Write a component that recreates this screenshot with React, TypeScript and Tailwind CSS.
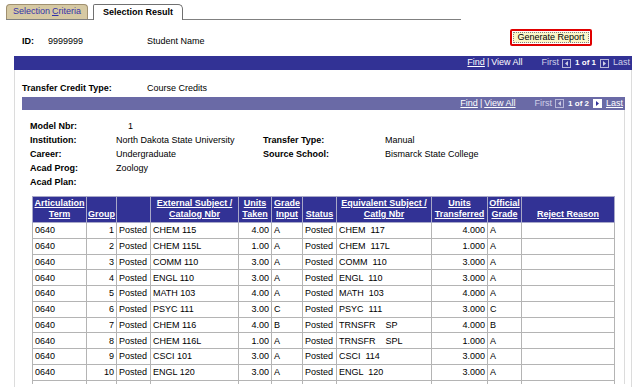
import React from 'react';

const rows = [
  ['0640', '1', 'Posted', 'CHEM 115', '4.00', 'A', 'Posted', 'CHEM  117', '4.000', 'A'],
  ['0640', '2', 'Posted', 'CHEM 115L', '1.00', 'A', 'Posted', 'CHEM  117L', '1.000', 'A'],
  ['0640', '3', 'Posted', 'COMM 110', '3.00', 'A', 'Posted', 'COMM  110', '3.000', 'A'],
  ['0640', '4', 'Posted', 'ENGL 110', '3.00', 'A', 'Posted', 'ENGL  110', '3.000', 'A'],
  ['0640', '5', 'Posted', 'MATH 103', '4.00', 'A', 'Posted', 'MATH  103', '4.000', 'A'],
  ['0640', '6', 'Posted', 'PSYC 111', '3.00', 'C', 'Posted', 'PSYC  111', '3.000', 'C'],
  ['0640', '7', 'Posted', 'CHEM 116', '4.00', 'B', 'Posted', 'TRNSFR    SP', '4.000', 'B'],
  ['0640', '8', 'Posted', 'CHEM 116L', '1.00', 'A', 'Posted', 'TRNSFR    SPL', '1.000', 'A'],
  ['0640', '9', 'Posted', 'CSCI 101', '3.00', 'A', 'Posted', 'CSCI  114', '3.000', 'A'],
  ['0640', '10', 'Posted', 'ENGL 120', '3.00', 'A', 'Posted', 'ENGL  120', '3.000', 'A'],
];

const colWidths = [54, 30, 34, 88, 33, 31, 34, 95, 56, 34, 93];
const rightAligned = [1, 4, 8];

function Arrow({ dir, enabled }: { dir: 'left' | 'right'; enabled?: boolean }) {
  return (
    <svg width="9" height="9" viewBox="0 0 9 9" className="shrink-0">
      <rect
        x="0.5"
        y="0.5"
        width="8"
        height="8"
        fill={enabled ? '#ffffff' : 'none'}
        stroke={enabled ? '#ffffff' : '#b8b8d8'}
      />
      {dir === 'left' ? (
        <polygon points="6,2 6,7 3,4.5" fill={enabled ? '#333399' : '#d0d0e8'} />
      ) : (
        <polygon points="3,2 3,7 6,4.5" fill={enabled ? '#333399' : '#d0d0e8'} />
      )}
    </svg>
  );
}

function NavBar({ total, bg, height }: { total: number; bg: string; height: string }) {
  return (
    <div className={`flex items-center justify-end pr-[2px] text-white ${bg} ${height}`}>
      <span className="underline">Find</span>
      <span className="ml-[2px]">|</span>
      <span className={`ml-[2px] ${total > 1 ? 'underline' : ''}`}>View All</span>
      <span className="ml-[19px] text-[#d0d0e8]">First</span>
      <span className="ml-[3px]">
        <Arrow dir="left" />
      </span>
      <span className="ml-[4px] text-[8px] font-bold">1 of {total}</span>
      <span className="ml-[4px]">
        <Arrow dir="right" enabled={total > 1} />
      </span>
      <span className={`ml-[4px] ${total > 1 ? 'underline' : 'text-[#d0d0e8]'}`}>Last</span>
    </div>
  );
}

export default function App() {
  return (
    <div className="w-[640px] h-[387px] overflow-hidden bg-white text-[9px] text-black font-['Liberation_Sans',Arial,sans-serif]">
      {/* tabs */}
      <div className="mt-[4px] ml-[6px] w-[455px] h-[16px] flex items-end border-b border-[#808080]">
        <div className="h-[15px] w-[82px] flex items-center justify-center rounded-t-[4px] border border-b-0 border-[#a09070] bg-[#d6c9a3] text-[#3333aa]">
          Selection <span className="ml-[2px] underline">C</span>riteria
        </div>
        <div className="ml-[5px] -mb-px h-[16px] w-[90px] flex items-center justify-center rounded-tr-[5px] rounded-tl-[2px] border border-b-0 border-[#707070] bg-white font-bold">
          Selection Result
        </div>
      </div>

      {/* id row */}
      <div className="h-[36px] flex items-start">
        <span className="ml-[22px] mt-[15px] font-bold">ID:</span>
        <span className="ml-[14px] mt-[15px]">9999999</span>
        <span className="ml-[64px] mt-[15px]">Student Name</span>
        <div className="ml-auto mr-[48px] mt-[9px] h-[17px] w-[82px] rounded-[2px] border-2 border-[#e00000] p-[1px]">
          <div className="h-full w-full flex items-center justify-center border border-dotted border-[#808080] bg-[#faf6c8]">
            Generate Report
          </div>
        </div>
      </div>

      {/* outer panel */}
      <div className="ml-[14px] w-[618px]">
        <NavBar total={1} bg="bg-[#323295]" height="h-[14px]" />
        <div className="border-l border-r border-[#dcdcdc] pl-[7px] pb-[20px]">
          <div className="pt-[11px] flex leading-[14px]">
            <span className="w-[125px] font-bold">Transfer Credit Type:</span>
            <span>Course Credits</span>
          </div>

          <div className="mt-[2px] w-[603px]">
            <NavBar total={2} bg="bg-[#6a6aa6]" height="h-[13px]" />
            <div className="border-r border-[#dcdcdc] pl-[8px] pt-[9px]">
              <div className="grid grid-cols-[86px_147px_122px_1fr] leading-[14px]">
                <span className="font-bold">Model Nbr:</span>
                <span className="pl-[12px]">1</span>
                <span />
                <span />
                <span className="font-bold">Institution:</span>
                <span>North Dakota State University</span>
                <span className="font-bold">Transfer Type:</span>
                <span>Manual</span>
                <span className="font-bold">Career:</span>
                <span>Undergraduate</span>
                <span className="font-bold">Source School:</span>
                <span>Bismarck State College</span>
                <span className="font-bold">Acad Prog:</span>
                <span>Zoology</span>
                <span />
                <span />
                <span className="font-bold">Acad Plan:</span>
                <span />
                <span />
                <span />
              </div>

              <table className="mt-[7px] ml-[2px] w-[583px] table-fixed border-collapse">
                <colgroup>
                  {colWidths.map((w, i) => (
                    <col key={i} style={{ width: w }} />
                  ))}
                </colgroup>
                <thead>
                  <tr className="h-[26px] bg-[#323295] text-white font-bold leading-[11px]">
                    {[
                      ['Articulation', 'Term'],
                      ['Group'],
                      [],
                      ['External Subject /', 'Catalog Nbr'],
                      ['Units', 'Taken'],
                      ['Grade', 'Input'],
                      ['Status'],
                      ['Equivalent Subject /', 'Catlg Nbr'],
                      ['Units', 'Transferred'],
                      ['Official', 'Grade'],
                      ['Reject Reason'],
                    ].map((lines, i) => (
                      <th
                        key={i}
                        className="border border-[#a8a8c8] px-0 pb-[2px] align-bottom text-center font-bold underline whitespace-nowrap"
                      >
                        {lines.map((l, j) => (
                          <div key={j}>{l}</div>
                        ))}
                      </th>
                    ))}
                  </tr>
                </thead>
                <tbody>
                  {rows.map((r, ri) => (
                    <tr key={ri} className="h-[15.75px]">
                      {r.concat(['']).map((c, ci) => (
                        <td
                          key={ci}
                          className={`border border-[#b4b4b4] px-[2px] py-0 leading-[12px] whitespace-pre ${
                            rightAligned.includes(ci) ? 'text-right' : 'text-left'
                          }`}
                        >
                          {c}
                        </td>
                      ))}
                    </tr>
                  ))}
                  <tr className="h-[4px]">
                    {colWidths.map((_, ci) => (
                      <td key={ci} className="border-l border-r border-[#b4b4b4] p-0" />
                    ))}
                  </tr>
                </tbody>
              </table>
            </div>
          </div>
        </div>
      </div>
    </div>
  );
}
